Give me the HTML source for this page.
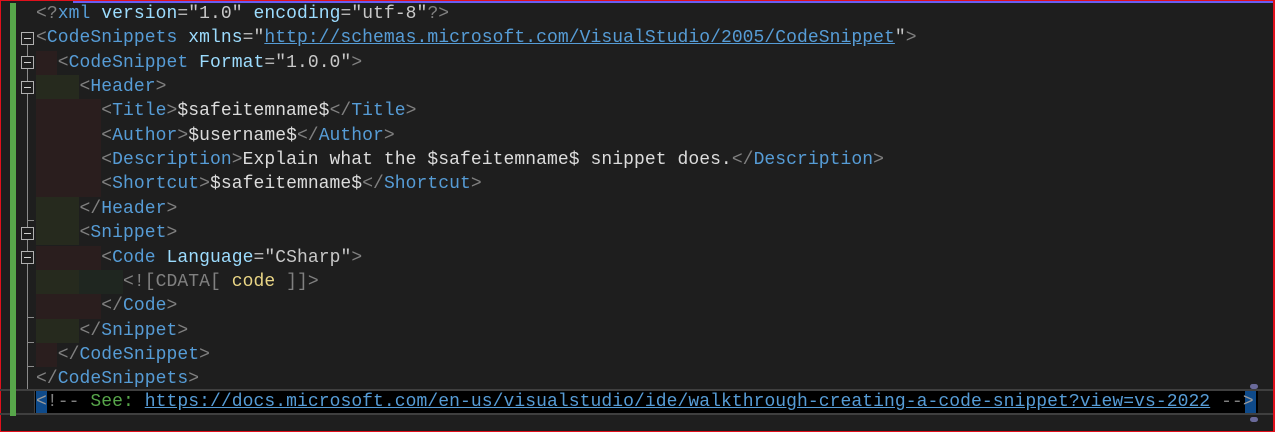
<!DOCTYPE html>
<html><head><meta charset="utf-8"><style>
html,body{margin:0;padding:0}
body{width:1275px;height:432px;background:#1e1e1e;position:relative;overflow:hidden;font-family:"Liberation Mono",monospace;font-size:18px}
.b{position:absolute}
.ln{position:absolute;left:36px;height:24.35px;line-height:24.35px;white-space:pre;color:#dcdcdc;letter-spacing:0.07px}
.d{color:#808080}.t{color:#569cd6}.a{color:#9cdcfe}.v{color:#c8c8c8}.e{color:#b4b4b4}
.u{color:#569cd6;text-decoration:underline}.g{color:#57a64a}.y{color:#e9d585}
.box{position:absolute;left:21px;width:11px;height:11px;border:1px solid #b0b0b0;background:#1e1e1e}
.box:after{content:"";position:absolute;left:2px;right:2px;top:5px;height:1px;background:#d0d0d0}
.tick{position:absolute;left:27px;width:7px;height:1px;background:#8a8a8a}
.r{background:#2a1e1e}.gr{background:#262a1e}.dg{background:#1f2620}
</style></head><body>
<div class="b" style="left:0;top:0;width:1275px;height:1px;background:#e0101c"></div>
<div class="b" style="left:73px;top:1px;width:1200px;height:2px;background:#6a5cf0"></div>
<div class="b" style="left:0;top:0;width:1px;height:432px;background:#e0101c"></div>
<div class="b" style="right:0;top:0;width:2px;height:432px;background:#e0101c"></div>
<div class="b" style="left:0;bottom:0;width:1275px;height:1px;background:#e0101c"></div>
<div class="b" style="left:10px;top:3px;width:6px;height:413px;background:#57a64a"></div>

<div class="b r" style="left:36px;top:50.7px;width:21px;height:24.35px"></div>
<div class="b gr" style="left:36px;top:75px;width:43px;height:24.35px"></div>
<div class="b r" style="left:36px;top:99.4px;width:65px;height:97.4px"></div>
<div class="b gr" style="left:36px;top:196.8px;width:43px;height:48.7px"></div>
<div class="b r" style="left:36px;top:245.5px;width:65px;height:24.35px"></div>
<div class="b gr" style="left:36px;top:269.9px;width:43px;height:24.35px"></div>
<div class="b dg" style="left:79px;top:269.9px;width:44px;height:24.35px"></div>
<div class="b r" style="left:36px;top:294.2px;width:65px;height:24.35px"></div>
<div class="b gr" style="left:36px;top:318.6px;width:43px;height:24.35px"></div>
<div class="b r" style="left:36px;top:342.9px;width:21px;height:24.35px"></div>

<div class="b" style="left:27px;top:38px;width:1px;height:353px;background:#8a8a8a"></div>
<div class="box" style="top:32px"></div>
<div class="box" style="top:56px"></div>
<div class="box" style="top:81px"></div>
<div class="box" style="top:227px"></div>
<div class="box" style="top:251px"></div>
<div class="tick" style="top:220px"></div>
<div class="tick" style="top:317px"></div>
<div class="tick" style="top:342px"></div>
<div class="tick" style="top:366px"></div>
<div class="tick" style="top:390px"></div>

<div class="ln" style="top:2px"><span class="d">&lt;?</span><span class="t">xml</span> <span class="a">version</span><span class="e">=</span><span class="v">"1.0"</span> <span class="a">encoding</span><span class="e">=</span><span class="v">"utf-8"</span><span class="d">?&gt;</span></div>
<div class="ln" style="top:26.35px"><span class="d">&lt;</span><span class="t">CodeSnippets</span> <span class="a">xmlns</span><span class="e">=</span><span class="v">"</span><span class="u">http://schemas.microsoft.com/VisualStudio/2005/CodeSnippet</span><span class="v">"</span><span class="d">&gt;</span></div>
<div class="ln" style="top:50.7px">  <span class="d">&lt;</span><span class="t">CodeSnippet</span> <span class="a">Format</span><span class="e">=</span><span class="v">"1.0.0"</span><span class="d">&gt;</span></div>
<div class="ln" style="top:75.05px">    <span class="d">&lt;</span><span class="t">Header</span><span class="d">&gt;</span></div>
<div class="ln" style="top:99.4px">      <span class="d">&lt;</span><span class="t">Title</span><span class="d">&gt;</span>$safeitemname$<span class="d">&lt;/</span><span class="t">Title</span><span class="d">&gt;</span></div>
<div class="ln" style="top:123.75px">      <span class="d">&lt;</span><span class="t">Author</span><span class="d">&gt;</span>$username$<span class="d">&lt;/</span><span class="t">Author</span><span class="d">&gt;</span></div>
<div class="ln" style="top:148.1px">      <span class="d">&lt;</span><span class="t">Description</span><span class="d">&gt;</span>Explain what the $safeitemname$ snippet does.<span class="d">&lt;/</span><span class="t">Description</span><span class="d">&gt;</span></div>
<div class="ln" style="top:172.45px">      <span class="d">&lt;</span><span class="t">Shortcut</span><span class="d">&gt;</span>$safeitemname$<span class="d">&lt;/</span><span class="t">Shortcut</span><span class="d">&gt;</span></div>
<div class="ln" style="top:196.8px">    <span class="d">&lt;/</span><span class="t">Header</span><span class="d">&gt;</span></div>
<div class="ln" style="top:221.15px">    <span class="d">&lt;</span><span class="t">Snippet</span><span class="d">&gt;</span></div>
<div class="ln" style="top:245.5px">      <span class="d">&lt;</span><span class="t">Code</span> <span class="a">Language</span><span class="e">=</span><span class="v">"CSharp"</span><span class="d">&gt;</span></div>
<div class="ln" style="top:269.85px">        <span class="d">&lt;![CDATA[</span> <span class="y">code</span> <span class="d">]]&gt;</span></div>
<div class="ln" style="top:294.2px">      <span class="d">&lt;/</span><span class="t">Code</span><span class="d">&gt;</span></div>
<div class="ln" style="top:318.55px">    <span class="d">&lt;/</span><span class="t">Snippet</span><span class="d">&gt;</span></div>
<div class="ln" style="top:342.9px">  <span class="d">&lt;/</span><span class="t">CodeSnippet</span><span class="d">&gt;</span></div>
<div class="ln" style="top:367.25px"><span class="d">&lt;/</span><span class="t">CodeSnippets</span><span class="d">&gt;</span></div>

<div class="b" style="left:0;top:389px;width:1273px;height:2px;background:#3f3f3f"></div>
<div class="b" style="left:0;top:413px;width:1273px;height:2px;background:#3f3f3f"></div>
<div class="b" style="left:10px;top:389px;width:6px;height:27px;background:#57a64a"></div>
<div class="b" style="left:34px;top:391px;width:1223px;height:22px;background:#000;border-left:1px solid #3f3f3f"></div>
<div class="b" style="left:36px;top:391px;width:11px;height:22px;background:#0e4a8a"></div>
<div class="b" style="left:1245px;top:391px;width:11px;height:22px;background:#0e4a8a"></div>
<div class="ln" style="top:390px"><span class="d" style="color:#9a9a9a">&lt;</span><span class="d">!--</span> <span class="g">See:</span> <span class="u">https://docs.microsoft.com/en-us/visualstudio/ide/walkthrough-creating-a-code-snippet?view=vs-2022</span> <span class="d">--</span><span class="d" style="color:#9a9a9a">&gt;</span></div>
<div class="b" style="left:1250px;top:384px;width:8px;height:5px;border-radius:4px;background:#6a6a9a"></div>
<div class="b" style="left:1250px;top:417px;width:8px;height:5px;border-radius:4px;background:#6a6a9a"></div>
</body></html>
